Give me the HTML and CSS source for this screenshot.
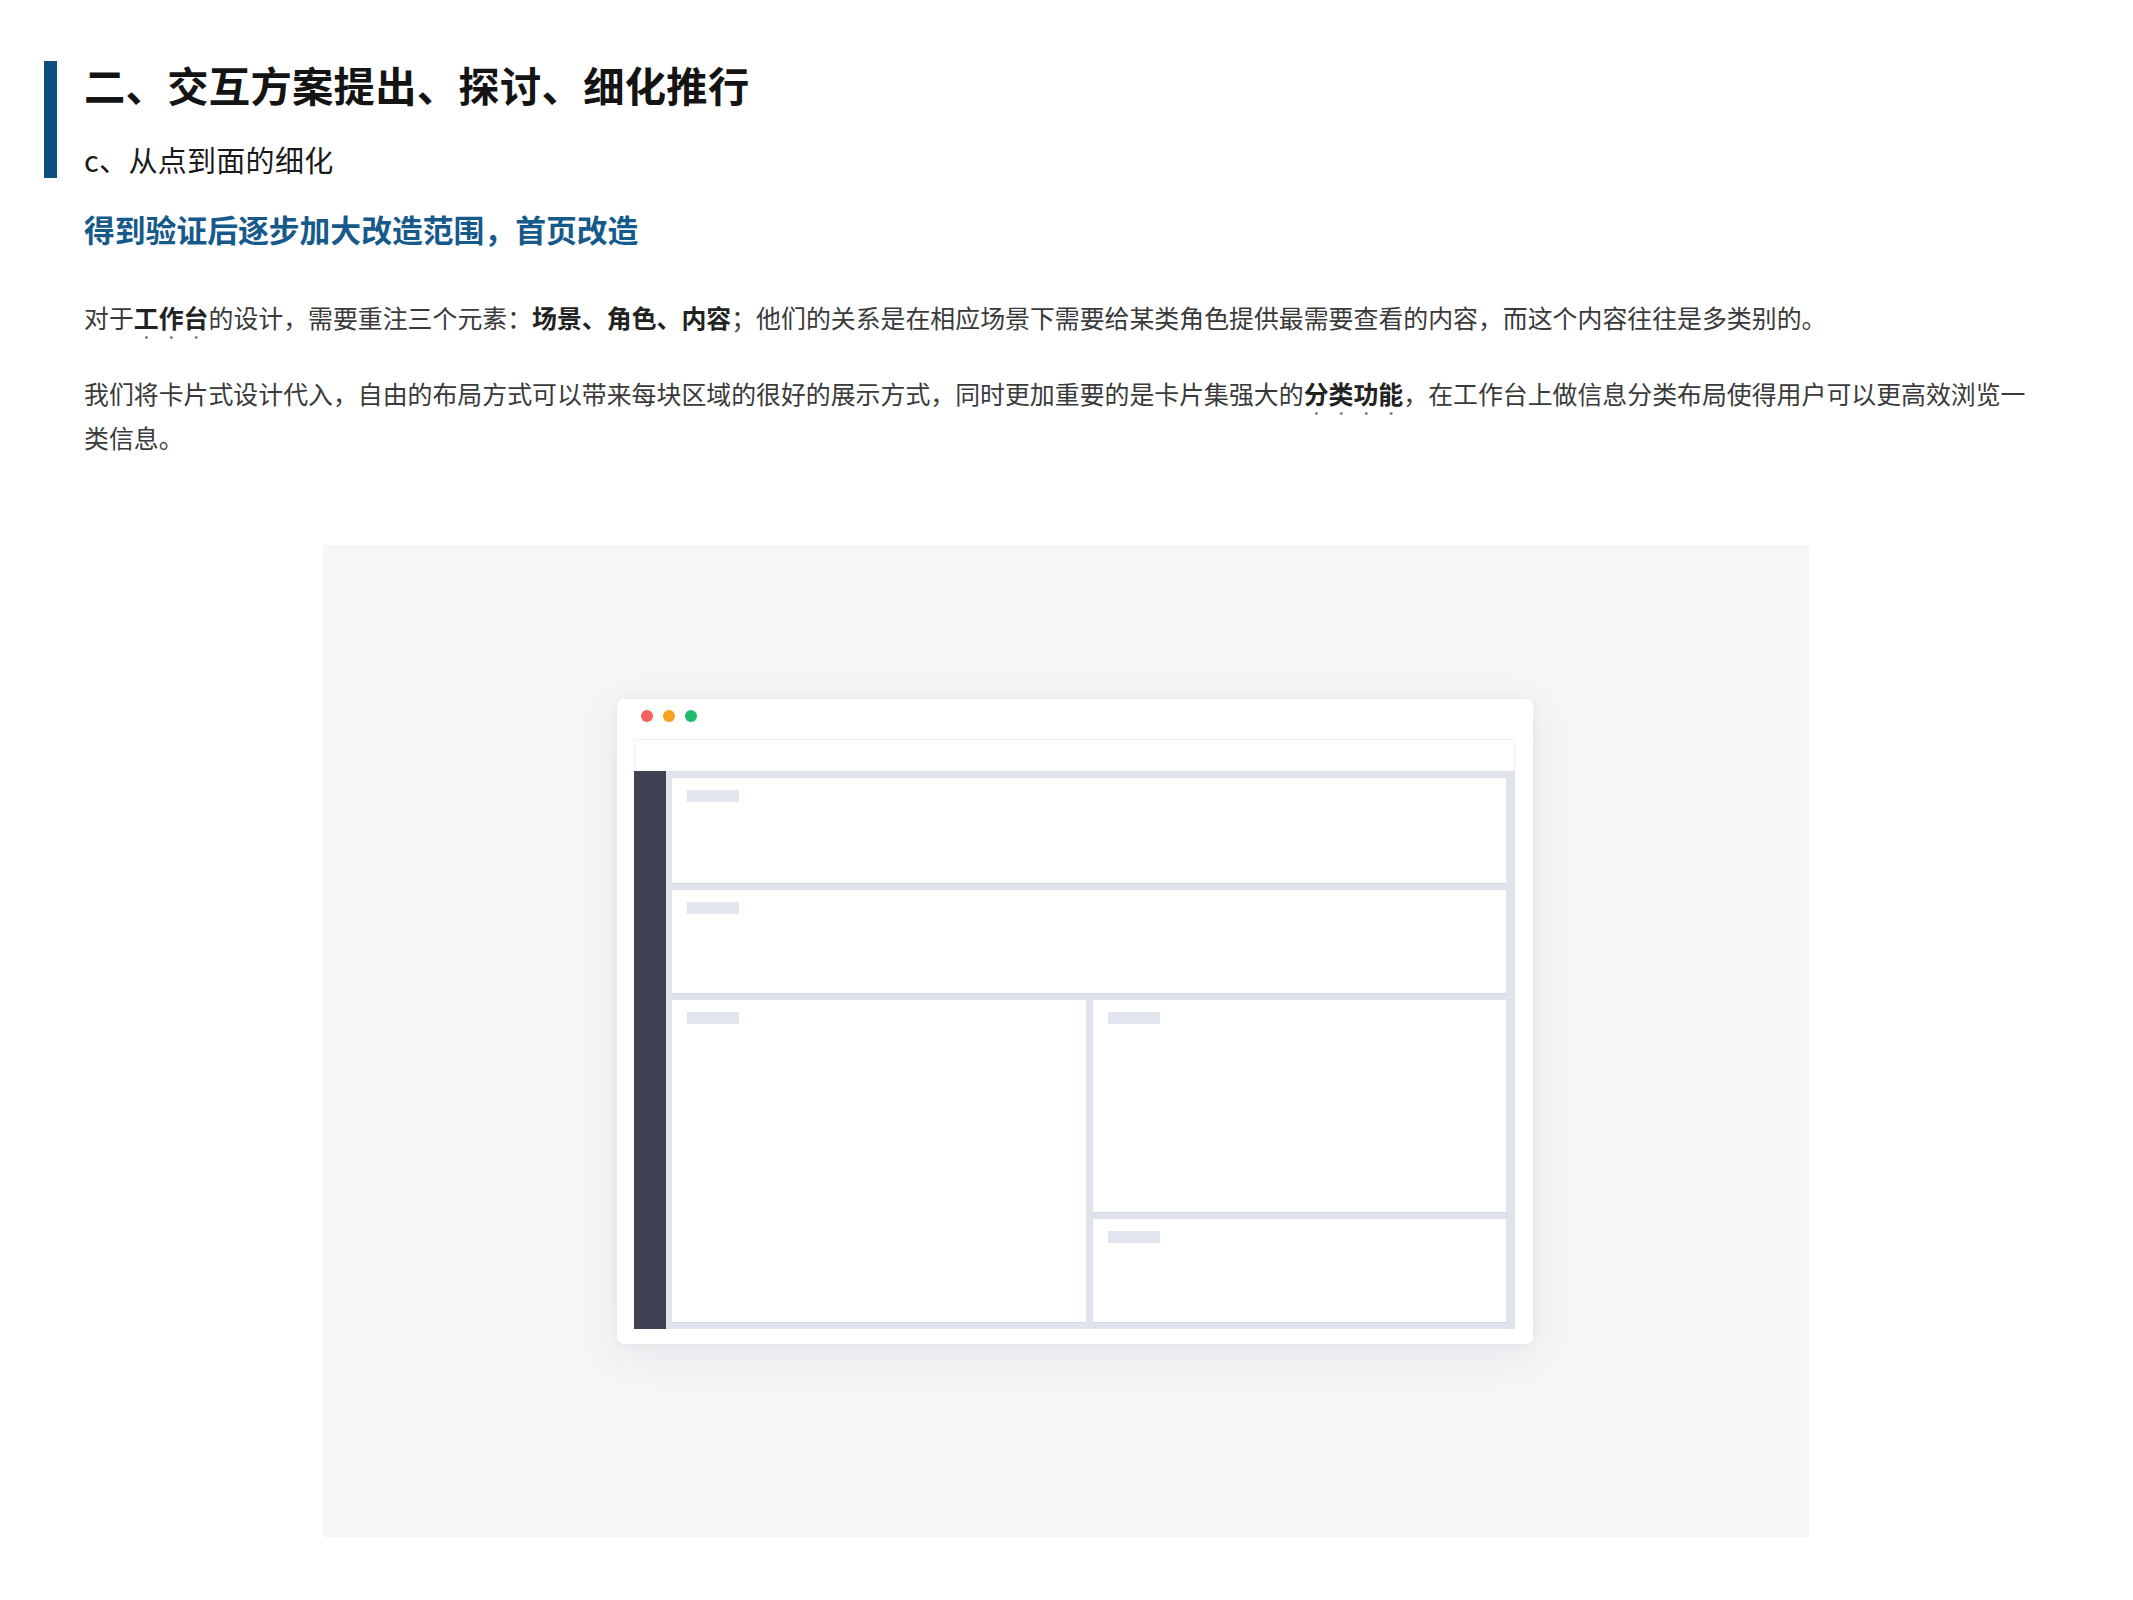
FILE: index.html
```html
<!DOCTYPE html>
<html lang="zh-CN">
<head>
<meta charset="utf-8">
<title>交互方案</title>
<link rel="stylesheet" href="styles.css">
</head>
<body>
<main class="page">
  <header class="section-head">
    <h1 class="title">二、交互方案提出、探讨、细化推行</h1>
    <p class="subtitle">c、从点到面的细化</p>
  </header>
  <h2 class="lead">得到验证后逐步加大改造范围，首页改造</h2>
  <p class="para">对于<strong class="dot">工作台</strong>的设计，需要重注三个元素：<strong>场景、角色、内容</strong>；他们的关系是在相应场景下需要给某类角色提供最需要查看的内容，而这个内容往往是多类别的。</p>
  <p class="para">我们将卡片式设计代入，自由的布局方式可以带来每块区域的很好的展示方式，同时更加重要的是卡片集强大的<strong class="dot">分类功能</strong>，在工作台上做信息分类布局使得用户可以更高效浏览一类信息。</p>

  <figure class="figure">
    <div class="window">
      <div class="lights">
        <span class="light red"></span>
        <span class="light amber"></span>
        <span class="light green"></span>
      </div>
      <div class="topbar"></div>
      <div class="app">
        <div class="sidebar"></div>
        <div class="content">
          <div class="card wide"><span class="ph"></span></div>
          <div class="card wide short"><span class="ph"></span></div>
          <div class="bottom">
            <div class="card tall"><span class="ph"></span></div>
            <div class="col">
              <div class="card grow"><span class="ph"></span></div>
              <div class="card short"><span class="ph"></span></div>
            </div>
          </div>
        </div>
      </div>
    </div>
  </figure>
</main>
</body>
</html>
```
FILE: styles.css
```css
* { box-sizing: border-box; }
html, body { margin: 0; padding: 0; background: #ffffff; }
body {
  font-family: "Noto Sans CJK SC", "Noto Sans", sans-serif;
  color: #333;
}
.page {
  padding: 61px 84px 60px 44px;
}
.section-head {
  border-left: 13px solid #0c4f80;
  padding-left: 27px;
}
.title {
  margin: 0;
  font-size: 41.3px;
  line-height: 46px;
  font-weight: 700;
  color: #141414;
  letter-spacing: 0.3px;
}
.subtitle {
  margin: 34px 0 0;
  font-size: 29px;
  line-height: 37px;
  font-weight: 400;
  color: #1a1a1a;
  letter-spacing: 0.3px;
}
.lead {
  margin: 31px 0 0 40px;
  font-size: 30.8px;
  line-height: 40px;
  font-weight: 700;
  color: #16598b;
}
.para {
  margin: 46px 0 0 40px;
  font-size: 24.9px;
  line-height: 44px;
  color: #3a3a3a;
}
.para + .para { margin-top: 32px; }
.para strong { font-weight: 700; color: #222; }
.dot {
  padding-bottom: 5px;
  background-image: radial-gradient(circle, #777 0, #777 1px, rgba(119,119,119,0) 1.6px);
  background-size: 1em 5px;
  background-position: 0 100%;
  background-repeat: repeat-x;
}

.figure {
  margin: 86px 0 0 279px;
  width: 1486px;
  height: 992px;
  background: #f5f6f8;
  padding: 154px 276px 0 294px;
}
.window {
  width: 916px;
  height: 645px;
  background: #fff;
  border-radius: 7px;
  box-shadow: 0 10px 40px rgba(40, 50, 70, 0.08), 0 0 12px rgba(40, 50, 70, 0.04);
  padding: 0 18px 15px 17px;
  display: flex;
  flex-direction: column;
}
.lights {
  height: 40px;
  display: flex;
  align-items: center;
  gap: 10px;
  padding-left: 7px;
  padding-bottom: 6px;
}
.light {
  width: 12px;
  height: 12px;
  border-radius: 50%;
}
.red { background: #f56060; }
.amber { background: #f5a31e; }
.green { background: #1cbd6b; }
.topbar {
  height: 32px;
  border: 1px solid #f2f3f5;
  border-bottom: none;
  background: #fff;
}
.app {
  flex: 1;
  display: flex;
}
.sidebar {
  width: 32px;
  background: #3e4253;
}
.content {
  flex: 1;
  background: #dfe3eb;
  padding: 7px 9px 7px 6px;
  display: flex;
  flex-direction: column;
  gap: 7px;
}
.card {
  background: #fff;
  box-shadow: 0 1px 0 #d2d7e1;
  padding: 12px 15px;
}
.card.wide { height: 105px; }
.card.wide.short { height: 103px; }
.bottom {
  flex: 1;
  display: grid;
  grid-template-columns: 1fr 1fr;
  gap: 7px;
}
.col {
  display: grid;
  grid-template-rows: 1fr 103px;
  gap: 7px;
}
.ph {
  display: block;
  width: 52px;
  height: 12px;
  background: #e1e5ee;
}
```
